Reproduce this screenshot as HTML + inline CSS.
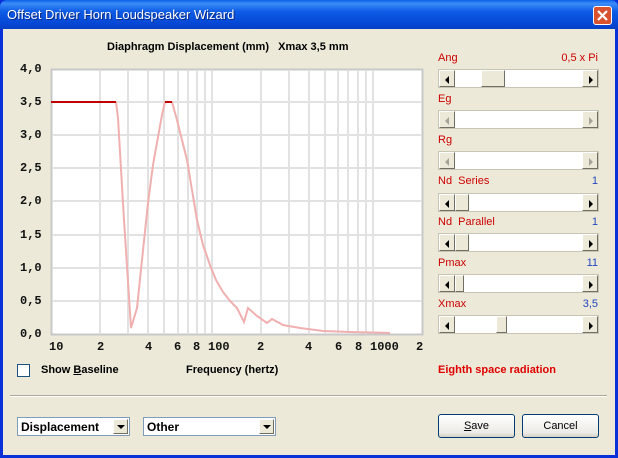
<!DOCTYPE html>
<html><head><style>
*{margin:0;padding:0;box-sizing:border-box}
body{width:618px;height:458px;overflow:hidden;background:#0831d9;font-family:"Liberation Sans",sans-serif;position:relative}
.title{position:absolute;left:0;top:0;width:618px;height:29px;background:linear-gradient(#0a5fe8 0%,#3d8cf7 12%,#0d5ce6 40%,#0548d6 80%,#0640c4 100%);border-radius:7px 7px 0 0}
.title span{position:absolute;left:7px;top:7px;color:#fff;font-size:13px;text-shadow:1px 1px #0a2a80}
.close{position:absolute;left:593px;top:6px;width:19px;height:19px;background:#d9522f;border:1px solid #fff;border-radius:3px}
.body{position:absolute;left:3px;top:29px;width:612px;height:426px;background:#ece9d8}
.a{position:absolute;white-space:nowrap}
.lbl{font-size:11px;color:#c00}
.val{font-size:11px;color:#2346c0;text-align:right}
.sl{position:absolute;left:438px;width:161px;height:19px;background:#fff;border:1px solid #c9c5b4}
.sl .b{position:absolute;top:0;width:16px;height:17px;background:#ece9d8;border:1px solid;border-color:#fff #716f64 #716f64 #fff}
.sl .l{left:0}.sl .r{right:0}
.sl .t{position:absolute;top:0;height:17px;background:#ece9d8;border:1px solid;border-color:#fff #716f64 #716f64 #fff}
.ar{position:absolute;top:5px;width:0;height:0;border-top:4px solid transparent;border-bottom:4px solid transparent}
.l .ar{left:5px;border-right:4px solid #000}.r .ar{left:6px;border-left:4px solid #000}
.dis .ar{opacity:.3}
.mono{font-family:"Liberation Mono",monospace;font-weight:bold;font-size:12px;color:#111}
.combo{position:absolute;top:417px;height:19px;background:#fff;border:1px solid #7f9db9;font-size:12px;font-weight:bold;padding:2px 3px}
.combo .dd{position:absolute;right:1px;top:1px;width:15px;height:15px;background:#ece9d8;border:1px solid;border-color:#fff #716f64 #716f64 #fff}
.combo .dd:after{content:"";position:absolute;left:3px;top:5px;border-left:4px solid transparent;border-right:4px solid transparent;border-top:4px solid #000}
.btn{position:absolute;top:414px;height:24px;width:77px;border:1px solid #003c74;border-radius:3px;background:linear-gradient(#fff,#ecebe6 80%,#d6d0c5);font-size:11px;text-align:center;line-height:22px}
</style></head><body>
<div class="title"><span>Offset Driver Horn Loudspeaker Wizard</span>
<div class="close"><svg width="17" height="17" viewBox="0 0 17 17"><path d="M4 4L13 13M13 4L4 13" stroke="#fff" stroke-width="2.2"/></svg></div></div>
<div class="body"></div>
<div class="a" style="left:107px;top:41px;font-size:11px;font-weight:bold">Diaphragm Displacement (mm)&nbsp;&nbsp; Xmax 3,5 mm</div>
<svg class="a" style="left:0;top:0" width="618" height="458">
<rect x="51.5" y="69.5" width="371" height="265" fill="#fff" stroke="#c8c8c8" stroke-width="2"/>
<g stroke="#e2e2e2" stroke-width="2">
<path d="M100 70V334M128 70V334M148 70V334M164 70V334M178 70V334M188 70V334M197 70V334M205 70V334M212 70V334M261 70V334M289 70V334M309 70V334M325 70V334M338 70V334M348 70V334M358 70V334M366 70V334M373 70V334"/>
<path d="M52 102H422M52 135H422M52 168H422M52 201H422M52 235H422M52 268H422M52 301H422"/>
</g>
<polyline fill="none" stroke="#f0b0b0" stroke-width="2" points="116,102 118,118 124,220 131,328 137,308 142,260 148,203 153,165 158,137 162,115 165,102 172,102 177,120 182,140 187,160 192,190 197,220 203,245 210,265 216,280 223,292 230,301 237,308 244,322 248,308 257,316 267,323 272,319 283,325 300,328 323,331 350,332 390,333"/>
<path d="M51 102H116M165 102H172" stroke="#c00000" stroke-width="2"/>
</svg>
<div class="a mono" style="left:20px;top:62px">4,0</div>
<div class="a mono" style="left:20px;top:95px">3,5</div>
<div class="a mono" style="left:20px;top:128px">3,0</div>
<div class="a mono" style="left:20px;top:161px">2,5</div>
<div class="a mono" style="left:20px;top:194px">2,0</div>
<div class="a mono" style="left:20px;top:228px">1,5</div>
<div class="a mono" style="left:20px;top:261px">1,0</div>
<div class="a mono" style="left:20px;top:294px">0,5</div>
<div class="a mono" style="left:20px;top:327px">0,0</div>
<div class="a mono" style="left:49px;top:340px">10</div>
<div class="a mono" style="left:97px;top:340px">2</div>
<div class="a mono" style="left:145px;top:340px">4</div>
<div class="a mono" style="left:174px;top:340px">6</div>
<div class="a mono" style="left:193px;top:340px">8</div>
<div class="a mono" style="left:208px;top:340px">100</div>
<div class="a mono" style="left:257px;top:340px">2</div>
<div class="a mono" style="left:305px;top:340px">4</div>
<div class="a mono" style="left:335px;top:340px">6</div>
<div class="a mono" style="left:355px;top:340px">8</div>
<div class="a mono" style="left:370px;top:340px">1000</div>
<div class="a mono" style="left:416px;top:340px">2</div>
<div class="a" style="left:17px;top:364px;width:13px;height:13px;background:#fff;border:1px solid #1c5180"></div>
<div class="a" style="left:41px;top:364px;font-size:11px;font-weight:bold">Show <u>B</u>aseline</div>
<div class="a" style="left:186px;top:364px;font-size:11px;font-weight:bold">Frequency (hertz)</div>
<div class="a" style="left:438px;top:364px;font-size:11px;font-weight:bold;color:#e00000">Eighth space radiation</div>

<div class="a lbl" style="left:438px;top:52px">Ang</div><div class="a lbl" style="left:540px;width:58px;text-align:right;top:52px">0,5 x Pi</div>
<div class="sl" style="top:69px"><div class="b l"><div class="ar"></div></div><div class="t" style="left:42px;width:24px"></div><div class="b r"><div class="ar"></div></div></div>
<div class="a lbl" style="left:438px;top:93px">Eg</div>
<div class="sl dis" style="top:110px"><div class="b l"><div class="ar"></div></div><div class="b r"><div class="ar"></div></div></div>
<div class="a lbl" style="left:438px;top:134px">Rg</div>
<div class="sl dis" style="top:151px"><div class="b l"><div class="ar"></div></div><div class="b r"><div class="ar"></div></div></div>
<div class="a lbl" style="left:438px;top:175px">Nd&nbsp; Series</div><div class="a val" style="left:560px;width:38px;top:175px">1</div>
<div class="sl" style="top:193px"><div class="b l"><div class="ar"></div></div><div class="t" style="left:16px;width:14px"></div><div class="b r"><div class="ar"></div></div></div>
<div class="a lbl" style="left:438px;top:216px">Nd&nbsp; Parallel</div><div class="a val" style="left:560px;width:38px;top:216px">1</div>
<div class="sl" style="top:233px"><div class="b l"><div class="ar"></div></div><div class="t" style="left:16px;width:14px"></div><div class="b r"><div class="ar"></div></div></div>
<div class="a lbl" style="left:438px;top:257px">Pmax</div><div class="a val" style="left:560px;width:38px;top:257px">11</div>
<div class="sl" style="top:274px"><div class="b l"><div class="ar"></div></div><div class="t" style="left:16px;width:9px"></div><div class="b r"><div class="ar"></div></div></div>
<div class="a lbl" style="left:438px;top:298px">Xmax</div><div class="a val" style="left:560px;width:38px;top:298px">3,5</div>
<div class="sl" style="top:315px"><div class="b l"><div class="ar"></div></div><div class="t" style="left:57px;width:11px"></div><div class="b r"><div class="ar"></div></div></div>

<div class="a" style="left:10px;top:395px;width:597px;height:2px;border-top:1px solid #aca899;border-bottom:1px solid #fff"></div>
<div class="combo" style="left:17px;width:113px">Displacement<div class="dd"></div></div>
<div class="combo" style="left:143px;width:133px">Other<div class="dd"></div></div>
<div class="btn" style="left:438px"><u>S</u>ave</div>
<div class="btn" style="left:522px">Cancel</div>
</body></html>
